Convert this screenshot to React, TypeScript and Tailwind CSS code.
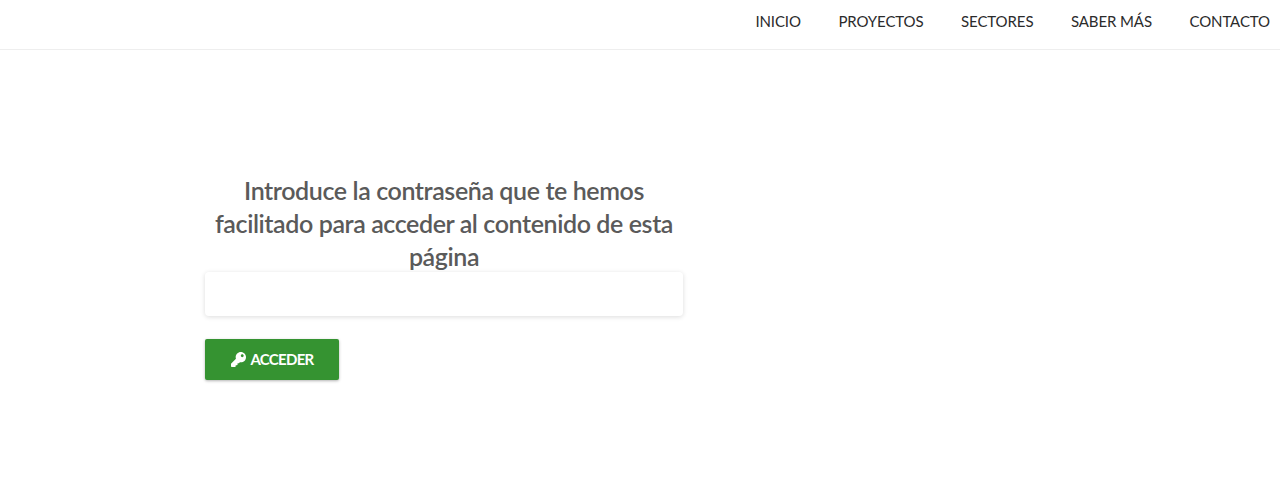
import { FaKey } from "react-icons/fa"

const links = ["INICIO", "PROYECTOS", "SECTORES", "SABER MÁS", "CONTACTO"]

const App = () => {
  return (
    <div className="h-[478px] overflow-hidden bg-white font-['Lato',sans-serif]">
      <header className="flex h-[50px] items-center justify-end gap-[37.5px] border-b border-[#eeeeee] pr-[10px] pb-[6px]">
        {links.map((link) => (
          <a key={link} className="text-[15px] tracking-[-0.1px] text-[#2b2b2b]">
            {link}
          </a>
        ))}
      </header>
      <main className="ml-[205px] w-[478px] pt-[124px]">
        <h2 className="text-center text-[25px] leading-[33px] font-semibold tracking-[-0.4px] text-[#5a5a5a]">
          Introduce la contraseña que te hemos facilitado para acceder al contenido de esta página
        </h2>
        <input
          type="password"
          className="mt-[-1px] block h-[44px] w-full rounded-[4px] bg-white shadow-[0_1px_5px_rgba(0,0,0,0.14)] outline-none"
        />
        <button className="mt-[23px] flex h-[41px] w-[134px] items-center justify-center gap-[4px] rounded-[2px] bg-[#359331] pl-[1px] text-[15px] font-bold tracking-[-0.7px] text-white shadow-[0_1px_3px_rgba(0,0,0,0.3)]">
          <FaKey className="h-[15px] w-[15px]" />
          ACCEDER
        </button>
      </main>
    </div>
  )
}

export default App
